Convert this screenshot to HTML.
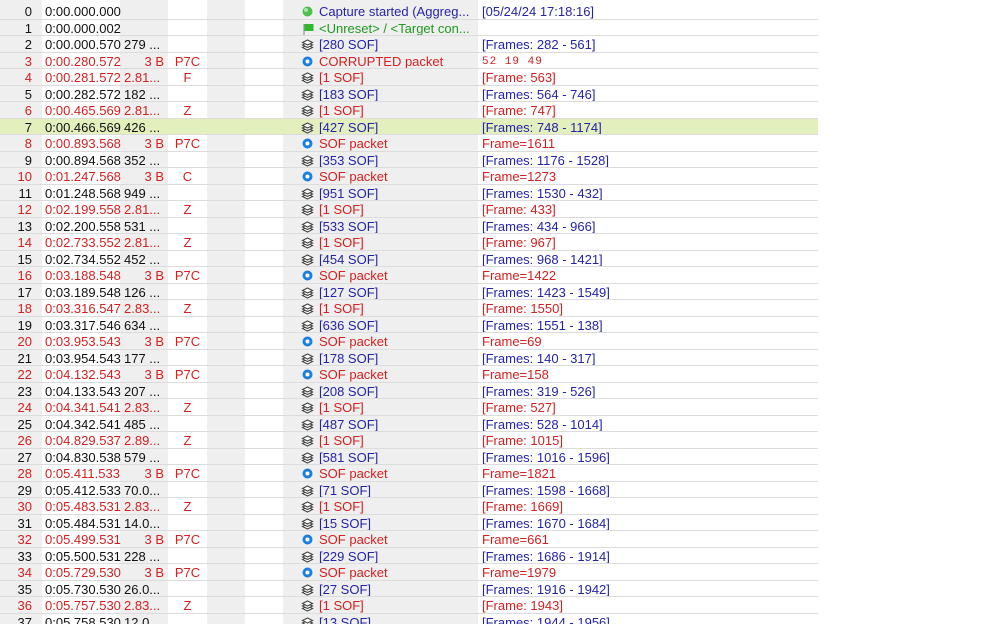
<!DOCTYPE html>
<html><head><meta charset="utf-8"><style>
body{margin:0;width:998px;height:624px;overflow:hidden;background:#fff;font-family:"Liberation Sans",Arial,sans-serif;font-size:13px;position:relative}
.c{position:absolute;top:0;height:624px;background:#efefef}
.r{position:absolute;left:0;width:818px;height:16.5px;border-bottom:1px solid #dcdcdc;box-sizing:border-box;line-height:18px;white-space:nowrap;overflow:hidden}
.r span{position:absolute;top:0}
.i{left:0;width:32px;text-align:right}
.t{left:45px}
.s{left:124px}
.sr{left:120px;width:44px;text-align:right}
.f{left:168px;width:39px;text-align:center}
.ic{position:absolute;left:301px;top:2px;width:13px;height:13px}
.m{left:319px}
.x{left:482px}
.k{color:#111}.R{color:#d42020}.B{color:#2424a8}.G{color:#1f9a1f}
.hl{background:#e3efbd}
.mono{font-family:"Liberation Mono",monospace;font-size:11px;letter-spacing:1px}
</style></head><body>
<div class="c" style="left:0;width:42px"></div>
<div class="c" style="left:120px;width:48px"></div>
<div class="c" style="left:207px;width:38px"></div>
<div class="c" style="left:283px;width:195px"></div>
<svg width="0" height="0" style="position:absolute"><defs>
<symbol id="st" viewBox="0 0 13 13"><g fill="#fff" stroke="#444" stroke-width="1.1"><path d="M1.5 9.5l5-2.5 5 2.5-5 2.5z"/><path d="M1.5 7l5-2.5 5 2.5-5 2.5z"/><path d="M1.5 4.5l5-2.5 5 2.5-5 2.5z"/></g></symbol>
<symbol id="bc" viewBox="0 0 13 13"><circle cx="6.5" cy="6.5" r="5" fill="#1a7fe0"/><circle cx="6.5" cy="6.5" r="2" fill="#fff"/></symbol>
</defs></svg>

<div class="r" style="top:3px"><span class="i k">0</span><span class="t k">0:00.000.000</span><svg class="ic" width="13" height="13"><circle cx="6.5" cy="6.5" r="5" fill="#4cc04c"/><circle cx="5" cy="5" r="2" fill="#a8e8a8"/></svg><span class="m B">Capture started (Aggreg...</span><span class="x B">[05/24/24 17:18:16]</span></div>
<div class="r" style="top:19.5px"><span class="i k">1</span><span class="t k">0:00.000.002</span><svg class="ic" width="14" height="14"><path d="M3 2v11" stroke="#999" stroke-width="1.3"/><path d="M3.5 2h9v7h-9z" fill="#2db82d"/></svg><span class="m G">&lt;Unreset&gt; / &lt;Target con...</span></div>
<div class="r" style="top:36px"><span class="i k">2</span><span class="t k">0:00.000.570</span><span class="s k">279 ...</span><svg class="ic"><use href="#st"/></svg><span class="m B">[280 SOF]</span><span class="x B">[Frames: 282 - 561]</span></div>
<div class="r R" style="top:52.5px"><span class="i">3</span><span class="t">0:00.280.572</span><span class="sr">3 B</span><span class="f">P7C</span><svg class="ic"><use href="#bc"/></svg><span class="m">CORRUPTED packet</span><span class="x mono">52 19 49</span></div>
<div class="r R" style="top:69px"><span class="i">4</span><span class="t">0:00.281.572</span><span class="s">2.81...</span><span class="f">F</span><svg class="ic"><use href="#st"/></svg><span class="m">[1 SOF]</span><span class="x">[Frame: 563]</span></div>
<div class="r" style="top:85.5px"><span class="i k">5</span><span class="t k">0:00.282.572</span><span class="s k">182 ...</span><svg class="ic"><use href="#st"/></svg><span class="m B">[183 SOF]</span><span class="x B">[Frames: 564 - 746]</span></div>
<div class="r R" style="top:102px"><span class="i">6</span><span class="t">0:00.465.569</span><span class="s">2.81...</span><span class="f">Z</span><svg class="ic"><use href="#st"/></svg><span class="m">[1 SOF]</span><span class="x">[Frame: 747]</span></div>
<div class="r hl" style="top:118.5px"><span class="i k">7</span><span class="t k">0:00.466.569</span><span class="s k">426 ...</span><svg class="ic"><use href="#st"/></svg><span class="m B">[427 SOF]</span><span class="x B">[Frames: 748 - 1174]</span></div>
<div class="r R" style="top:135px"><span class="i">8</span><span class="t">0:00.893.568</span><span class="sr">3 B</span><span class="f">P7C</span><svg class="ic"><use href="#bc"/></svg><span class="m">SOF packet</span><span class="x">Frame=1611</span></div>
<div class="r" style="top:151.5px"><span class="i k">9</span><span class="t k">0:00.894.568</span><span class="s k">352 ...</span><svg class="ic"><use href="#st"/></svg><span class="m B">[353 SOF]</span><span class="x B">[Frames: 1176 - 1528]</span></div>
<div class="r R" style="top:168px"><span class="i">10</span><span class="t">0:01.247.568</span><span class="sr">3 B</span><span class="f">C</span><svg class="ic"><use href="#bc"/></svg><span class="m">SOF packet</span><span class="x">Frame=1273</span></div>
<div class="r" style="top:184.5px"><span class="i k">11</span><span class="t k">0:01.248.568</span><span class="s k">949 ...</span><svg class="ic"><use href="#st"/></svg><span class="m B">[951 SOF]</span><span class="x B">[Frames: 1530 - 432]</span></div>
<div class="r R" style="top:201px"><span class="i">12</span><span class="t">0:02.199.558</span><span class="s">2.81...</span><span class="f">Z</span><svg class="ic"><use href="#st"/></svg><span class="m">[1 SOF]</span><span class="x">[Frame: 433]</span></div>
<div class="r" style="top:217.5px"><span class="i k">13</span><span class="t k">0:02.200.558</span><span class="s k">531 ...</span><svg class="ic"><use href="#st"/></svg><span class="m B">[533 SOF]</span><span class="x B">[Frames: 434 - 966]</span></div>
<div class="r R" style="top:234px"><span class="i">14</span><span class="t">0:02.733.552</span><span class="s">2.81...</span><span class="f">Z</span><svg class="ic"><use href="#st"/></svg><span class="m">[1 SOF]</span><span class="x">[Frame: 967]</span></div>
<div class="r" style="top:250.5px"><span class="i k">15</span><span class="t k">0:02.734.552</span><span class="s k">452 ...</span><svg class="ic"><use href="#st"/></svg><span class="m B">[454 SOF]</span><span class="x B">[Frames: 968 - 1421]</span></div>
<div class="r R" style="top:267px"><span class="i">16</span><span class="t">0:03.188.548</span><span class="sr">3 B</span><span class="f">P7C</span><svg class="ic"><use href="#bc"/></svg><span class="m">SOF packet</span><span class="x">Frame=1422</span></div>
<div class="r" style="top:283.5px"><span class="i k">17</span><span class="t k">0:03.189.548</span><span class="s k">126 ...</span><svg class="ic"><use href="#st"/></svg><span class="m B">[127 SOF]</span><span class="x B">[Frames: 1423 - 1549]</span></div>
<div class="r R" style="top:300px"><span class="i">18</span><span class="t">0:03.316.547</span><span class="s">2.83...</span><span class="f">Z</span><svg class="ic"><use href="#st"/></svg><span class="m">[1 SOF]</span><span class="x">[Frame: 1550]</span></div>
<div class="r" style="top:316.5px"><span class="i k">19</span><span class="t k">0:03.317.546</span><span class="s k">634 ...</span><svg class="ic"><use href="#st"/></svg><span class="m B">[636 SOF]</span><span class="x B">[Frames: 1551 - 138]</span></div>
<div class="r R" style="top:333px"><span class="i">20</span><span class="t">0:03.953.543</span><span class="sr">3 B</span><span class="f">P7C</span><svg class="ic"><use href="#bc"/></svg><span class="m">SOF packet</span><span class="x">Frame=69</span></div>
<div class="r" style="top:349.5px"><span class="i k">21</span><span class="t k">0:03.954.543</span><span class="s k">177 ...</span><svg class="ic"><use href="#st"/></svg><span class="m B">[178 SOF]</span><span class="x B">[Frames: 140 - 317]</span></div>
<div class="r R" style="top:366px"><span class="i">22</span><span class="t">0:04.132.543</span><span class="sr">3 B</span><span class="f">P7C</span><svg class="ic"><use href="#bc"/></svg><span class="m">SOF packet</span><span class="x">Frame=158</span></div>
<div class="r" style="top:382.5px"><span class="i k">23</span><span class="t k">0:04.133.543</span><span class="s k">207 ...</span><svg class="ic"><use href="#st"/></svg><span class="m B">[208 SOF]</span><span class="x B">[Frames: 319 - 526]</span></div>
<div class="r R" style="top:399px"><span class="i">24</span><span class="t">0:04.341.541</span><span class="s">2.83...</span><span class="f">Z</span><svg class="ic"><use href="#st"/></svg><span class="m">[1 SOF]</span><span class="x">[Frame: 527]</span></div>
<div class="r" style="top:415.5px"><span class="i k">25</span><span class="t k">0:04.342.541</span><span class="s k">485 ...</span><svg class="ic"><use href="#st"/></svg><span class="m B">[487 SOF]</span><span class="x B">[Frames: 528 - 1014]</span></div>
<div class="r R" style="top:432px"><span class="i">26</span><span class="t">0:04.829.537</span><span class="s">2.89...</span><span class="f">Z</span><svg class="ic"><use href="#st"/></svg><span class="m">[1 SOF]</span><span class="x">[Frame: 1015]</span></div>
<div class="r" style="top:448.5px"><span class="i k">27</span><span class="t k">0:04.830.538</span><span class="s k">579 ...</span><svg class="ic"><use href="#st"/></svg><span class="m B">[581 SOF]</span><span class="x B">[Frames: 1016 - 1596]</span></div>
<div class="r R" style="top:465px"><span class="i">28</span><span class="t">0:05.411.533</span><span class="sr">3 B</span><span class="f">P7C</span><svg class="ic"><use href="#bc"/></svg><span class="m">SOF packet</span><span class="x">Frame=1821</span></div>
<div class="r" style="top:481.5px"><span class="i k">29</span><span class="t k">0:05.412.533</span><span class="s k">70.0...</span><svg class="ic"><use href="#st"/></svg><span class="m B">[71 SOF]</span><span class="x B">[Frames: 1598 - 1668]</span></div>
<div class="r R" style="top:498px"><span class="i">30</span><span class="t">0:05.483.531</span><span class="s">2.83...</span><span class="f">Z</span><svg class="ic"><use href="#st"/></svg><span class="m">[1 SOF]</span><span class="x">[Frame: 1669]</span></div>
<div class="r" style="top:514.5px"><span class="i k">31</span><span class="t k">0:05.484.531</span><span class="s k">14.0...</span><svg class="ic"><use href="#st"/></svg><span class="m B">[15 SOF]</span><span class="x B">[Frames: 1670 - 1684]</span></div>
<div class="r R" style="top:531px"><span class="i">32</span><span class="t">0:05.499.531</span><span class="sr">3 B</span><span class="f">P7C</span><svg class="ic"><use href="#bc"/></svg><span class="m">SOF packet</span><span class="x">Frame=661</span></div>
<div class="r" style="top:547.5px"><span class="i k">33</span><span class="t k">0:05.500.531</span><span class="s k">228 ...</span><svg class="ic"><use href="#st"/></svg><span class="m B">[229 SOF]</span><span class="x B">[Frames: 1686 - 1914]</span></div>
<div class="r R" style="top:564px"><span class="i">34</span><span class="t">0:05.729.530</span><span class="sr">3 B</span><span class="f">P7C</span><svg class="ic"><use href="#bc"/></svg><span class="m">SOF packet</span><span class="x">Frame=1979</span></div>
<div class="r" style="top:580.5px"><span class="i k">35</span><span class="t k">0:05.730.530</span><span class="s k">26.0...</span><svg class="ic"><use href="#st"/></svg><span class="m B">[27 SOF]</span><span class="x B">[Frames: 1916 - 1942]</span></div>
<div class="r R" style="top:597px"><span class="i">36</span><span class="t">0:05.757.530</span><span class="s">2.83...</span><span class="f">Z</span><svg class="ic"><use href="#st"/></svg><span class="m">[1 SOF]</span><span class="x">[Frame: 1943]</span></div>
<div class="r" style="top:613.5px;height:10.5px;border-bottom:0"><span class="i k">37</span><span class="t k">0:05.758.530</span><span class="s k">12.0...</span><svg class="ic"><use href="#st"/></svg><span class="m B">[13 SOF]</span><span class="x B">[Frames: 1944 - 1956]</span></div>
</body></html>
